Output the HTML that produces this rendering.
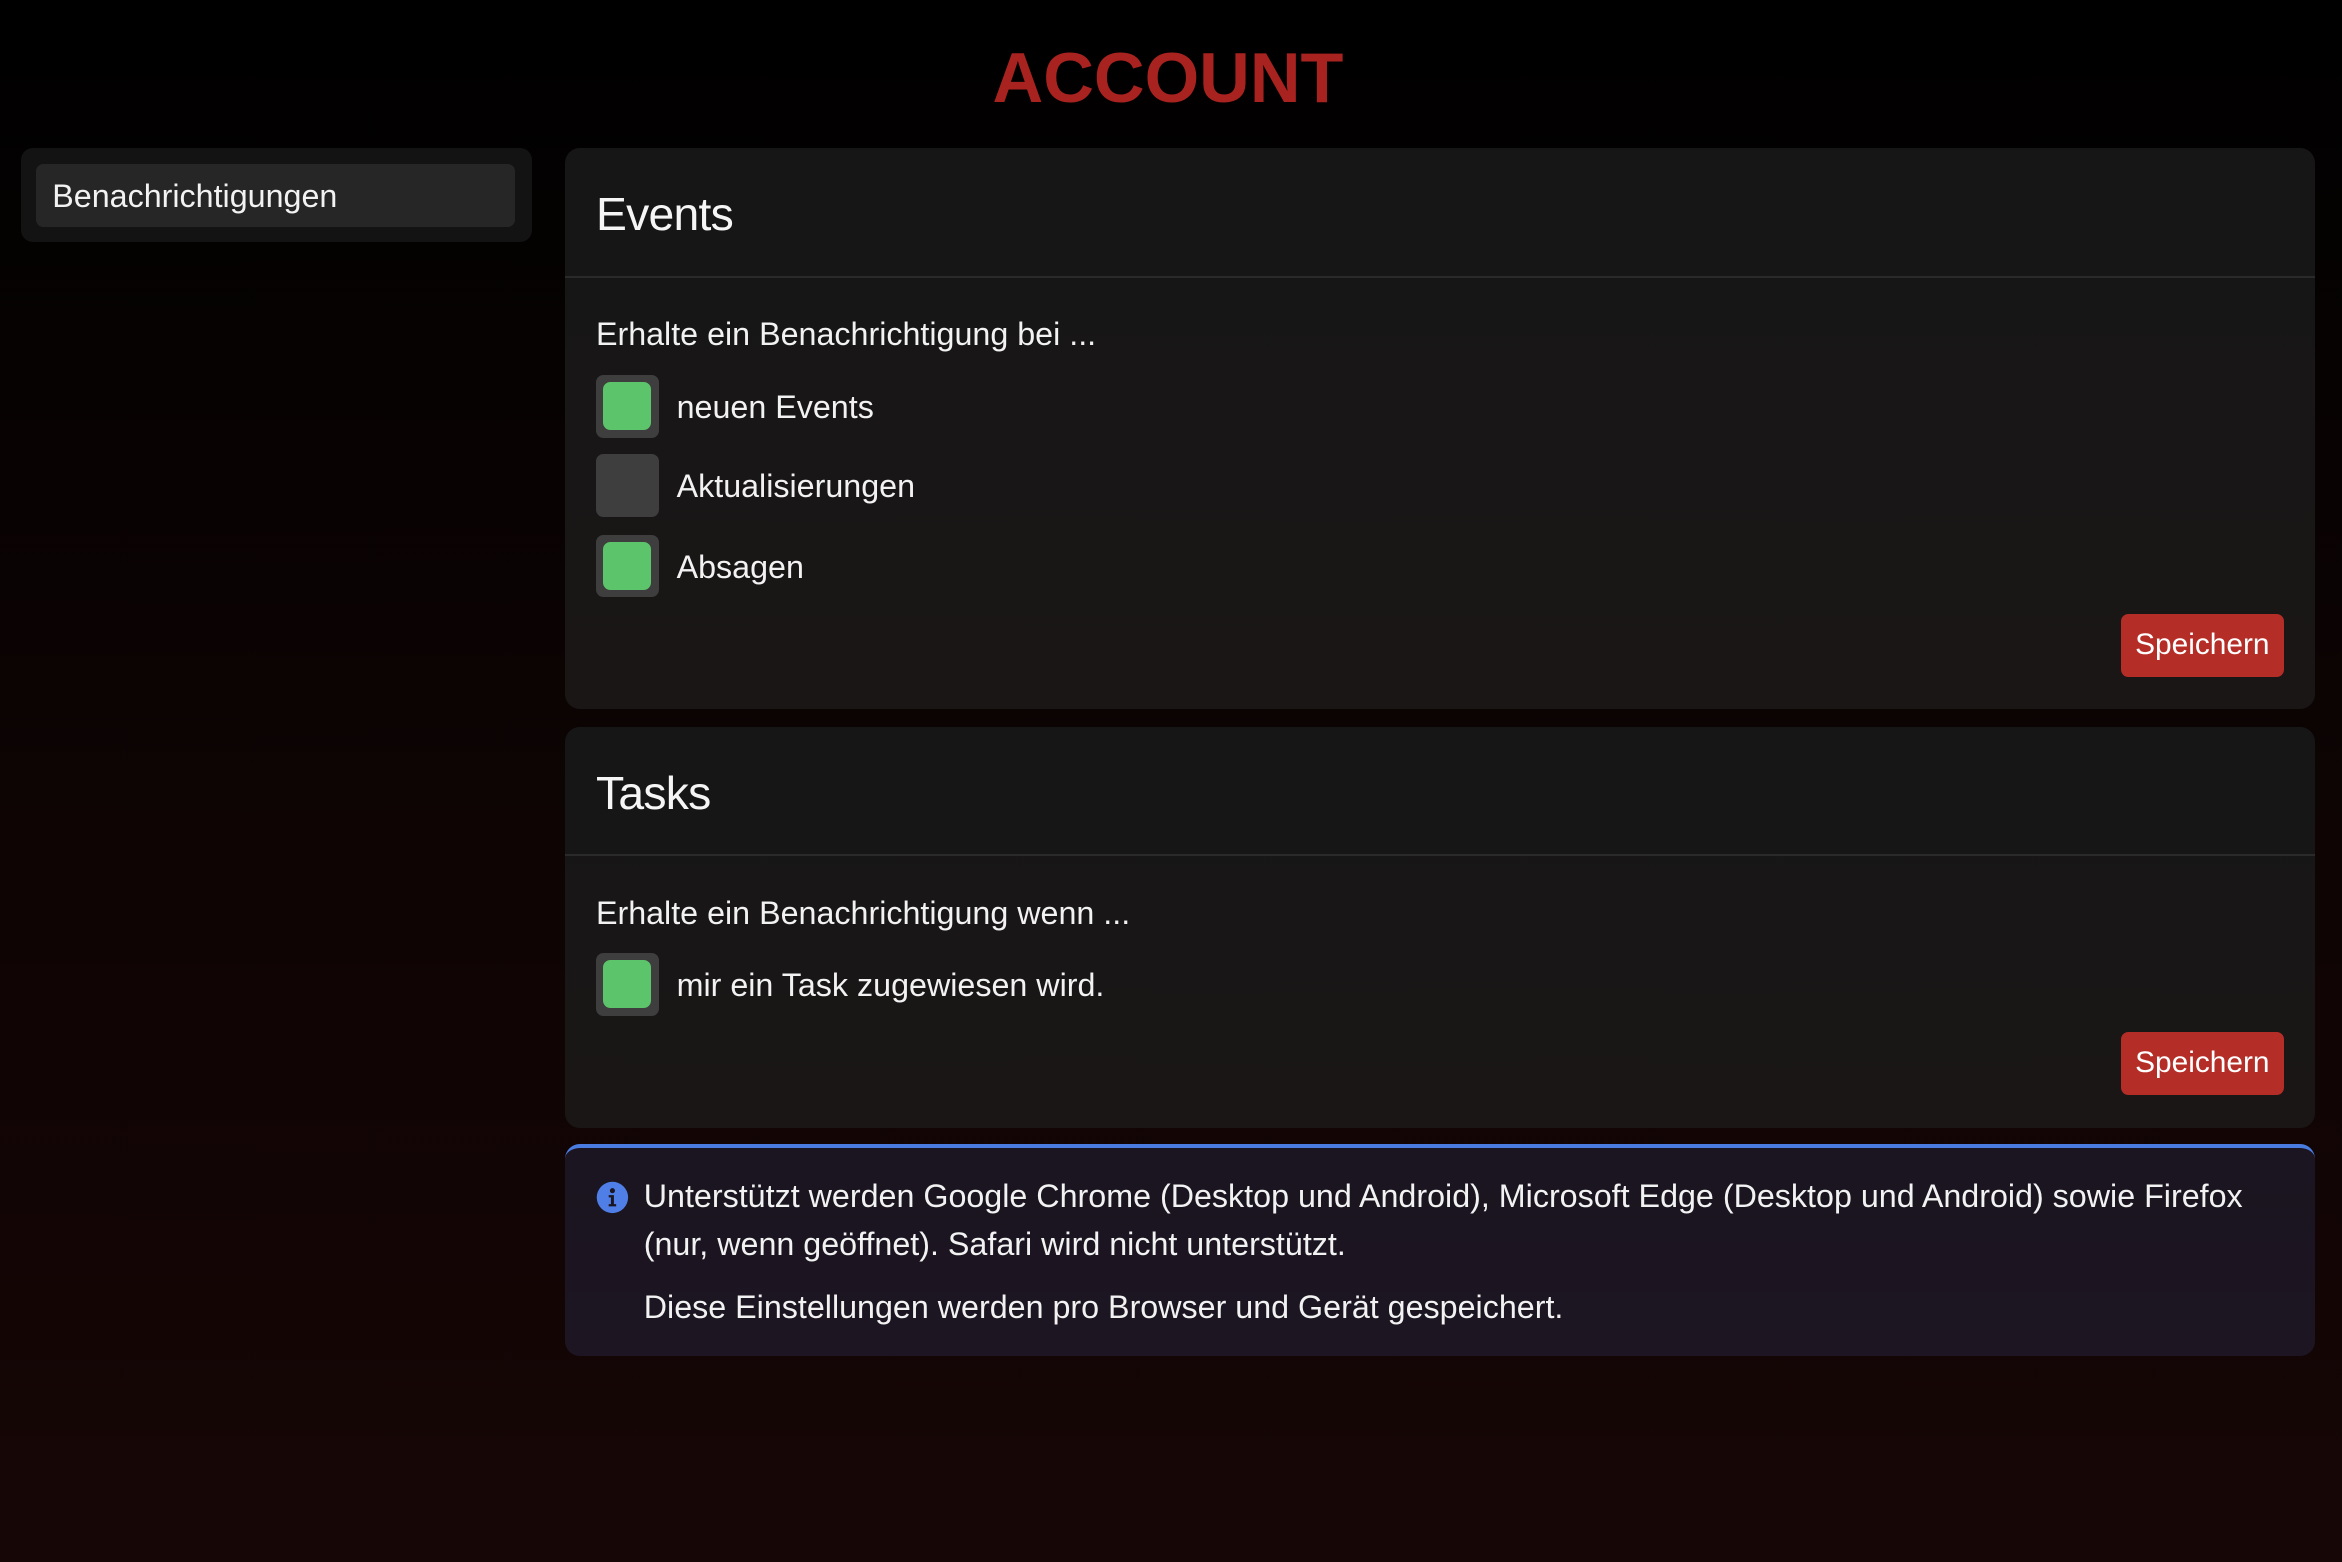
<!DOCTYPE html>
<html><head><meta charset="utf-8"><style>
html,body{margin:0;padding:0}
body{width:2342px;height:1562px;overflow:hidden;background:linear-gradient(180deg,#000 0%,#0b0303 40%,#170606 100%);font-family:"Liberation Sans",sans-serif;color:#f2f2f2}
#z{zoom:1.4936;position:relative;width:1568px;height:1046px}
.a{position:absolute}
h1{position:absolute;left:0;width:1564px;top:25px;margin:0;text-align:center;font-size:47px;font-weight:bold;color:#a8231f}
.card{position:absolute;left:378px;width:1172px;background:linear-gradient(180deg,#161616,#1a1616);border-radius:10px}
.hd{position:absolute;left:21px;font-size:31px;font-weight:300;color:#f5f5f5;letter-spacing:-0.5px}
.div{position:absolute;left:0;right:0;height:1px;background:#2a2a2a}
.t{position:absolute;left:21px;font-size:21.6px;line-height:24px}
.cb{position:absolute;left:21px;width:42px;height:42px;background:#3e3e3e;border-radius:5px}
.cb i{position:absolute;left:5px;top:5px;width:32px;height:32px;background:#5cc46a;border-radius:5px}
.lb{position:absolute;left:75px;font-size:21.6px;line-height:24px}
.btn{position:absolute;right:21px;width:109px;height:42px;background:#b52d27;border-radius:5px;color:#fff;font-size:20px;line-height:42px;text-align:center}
</style></head><body><div id="z">
<h1>ACCOUNT</h1>
<div class="a" style="left:14px;top:99px;width:342px;height:63px;background:#131313;border-radius:8px">
<div class="a" style="left:10px;top:11px;width:321px;height:42px;background:#262626;border-radius:5px"><div class="a" style="left:11px;top:10px;font-size:21.6px;line-height:24px">Benachrichtigungen</div></div>
</div>
<div class="card" style="top:99px;height:376px">
<div class="hd" style="top:26px">Events</div>
<div class="div" style="top:86px"></div>
<div class="t" style="top:113px">Erhalte ein Benachrichtigung bei ...</div>
<div class="cb" style="top:152px"><i></i></div><div class="lb" style="top:162px">neuen Events</div>
<div class="cb" style="top:205px"></div><div class="lb" style="top:215px">Aktualisierungen</div>
<div class="cb" style="top:259px"><i></i></div><div class="lb" style="top:269px">Absagen</div>
<div class="btn" style="top:312px">Speichern</div>
</div>
<div class="card" style="top:487px;height:268px">
<div class="hd" style="top:26px">Tasks</div>
<div class="div" style="top:85px"></div>
<div class="t" style="top:113px">Erhalte ein Benachrichtigung wenn ...</div>
<div class="cb" style="top:151px"><i></i></div><div class="lb" style="top:161px">mir ein Task zugewiesen wird.</div>
<div class="btn" style="top:204px">Speichern</div>
</div>
<div class="a" style="left:378px;top:766px;width:1172px;height:142px;background:linear-gradient(180deg,#1a1520,#1d1522);border-radius:10px;border-top:3px solid #4a7be0;box-sizing:border-box">
<svg class="a" style="left:21px;top:22px" width="22" height="22" viewBox="0 0 22 22"><circle cx="11" cy="11" r="10.5" fill="#4f7fe6"/><circle cx="11" cy="6.5" r="1.7" fill="#1a1520"/><path d="M8.5 9.5h3.5v6h1.5v1.5h-5v-1.5h1.5v-4.5h-1.5z" fill="#1a1520"/></svg>
<div class="a" style="left:53px;top:17px;width:1100px;font-size:21.6px;line-height:32px">Unterstützt werden Google Chrome (Desktop und Android), Microsoft Edge (Desktop und Android) sowie Firefox (nur, wenn geöffnet). Safari wird nicht unterstützt.</div>
<div class="a" style="left:53px;top:95px;font-size:21.6px;line-height:24px">Diese Einstellungen werden pro Browser und Gerät gespeichert.</div>
</div>
</div></body></html>
